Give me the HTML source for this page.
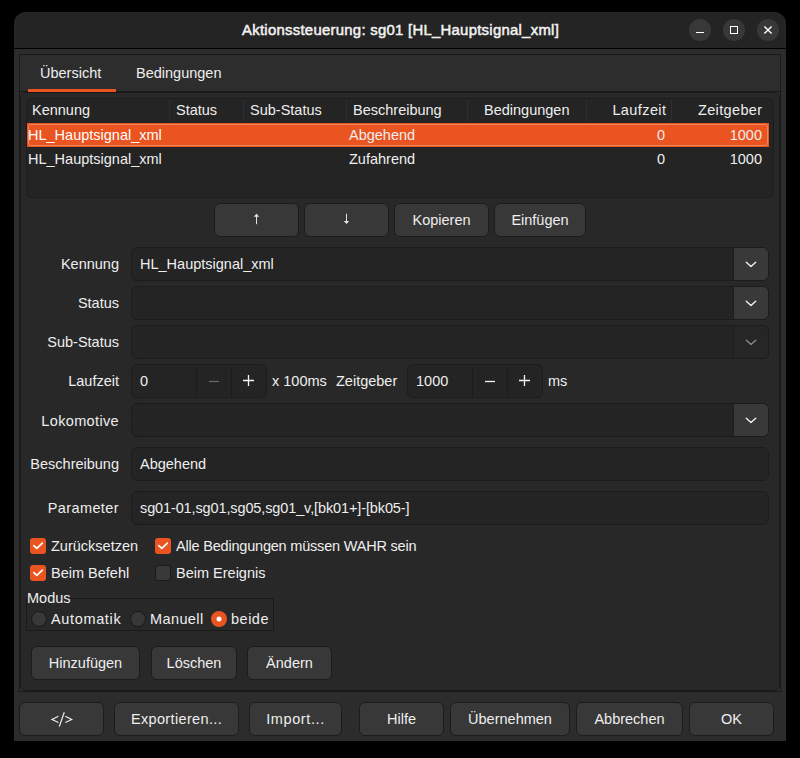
<!DOCTYPE html>
<html><head><meta charset="utf-8">
<style>
*{box-sizing:border-box;margin:0;padding:0}
html,body{width:800px;height:758px;background:#000;overflow:hidden}
body{position:relative;font-family:"Liberation Sans",sans-serif;font-size:14.5px;color:#eeeeee}
.a{position:absolute}
.t{position:absolute;white-space:nowrap;line-height:20px;height:20px}
.win{position:absolute;left:14px;top:12px;width:772px;height:729px;background:#2c2c2c;border-radius:12px 12px 0 0;overflow:hidden}
.hdr{position:absolute;left:0;top:0;width:772px;height:36px;background:#242424;border-bottom:1px solid #000}
.wb{position:absolute;top:7px;width:22px;height:22px;border-radius:50%;background:#3a3a3a}
.nb{position:absolute;left:19px;top:54px;width:762px;height:638px;border:1px solid #1c1c1c;background:#2e2e2e}
.page{position:absolute;left:20px;top:92px;width:760px;height:599px;background:#2a2a2a;border-radius:6px 6px 0 0}
.tree{position:absolute;left:26px;top:98px;width:748px;height:100px;background:#242424;border:1px solid #1c1c1c;border-radius:6px}
.sep{position:absolute;top:100px;width:1px;height:22px;background:#2e2e2e}
.btn{position:absolute;background:#383838;border:1px solid #1c1c1c;border-radius:6px;text-align:center;line-height:32px;white-space:nowrap}
.ent{position:absolute;left:131px;width:638px;height:34px;background:#242424;border:1px solid #1c1c1c;border-radius:6px}
.dd{position:absolute;right:0;top:0;width:35px;height:32px;background:#393939;border-left:1px solid #1c1c1c;border-radius:0 5px 5px 0}
.lbl{position:absolute;right:681px;white-space:nowrap;line-height:20px;height:20px}
.cb{position:absolute;width:16px;height:16px;border-radius:3px;background:#e95420}
.cbu{position:absolute;width:16px;height:16px;border-radius:3px;background:#383838;border:1px solid #1a1a1a}
.rd{position:absolute;width:16px;height:16px;border-radius:50%;background:#383838;border:1px solid #1a1a1a}
</style></head><body>
<div class="win"></div>
<!-- header -->
<div class="a" style="left:14px;top:12px;width:772px;height:36px;background:#242424;border-radius:12px 12px 0 0"></div>
<div class="a" style="left:14px;top:48px;width:772px;height:1px;background:#000"></div>
<div class="t" style="left:242px;top:20px;font-size:14.9px;color:#f2f2f2;-webkit-text-stroke:0.5px #f2f2f2;letter-spacing:0.27px">Aktionssteuerung: sg01 [HL_Hauptsignal_xml]</div>
<div class="a" style="left:689px;top:19px;width:22px;height:22px;border-radius:50%;background:#383838"></div>
<div class="a" style="left:696px;top:32px;width:8px;height:1.4px;background:#fff"></div>
<div class="a" style="left:723px;top:19px;width:22px;height:22px;border-radius:50%;background:#383838"></div>
<div class="a" style="left:730px;top:26px;width:8px;height:8px;border:1.5px solid #fff"></div>
<div class="a" style="left:757px;top:19px;width:22px;height:22px;border-radius:50%;background:#383838"></div>
<svg class="a" style="left:757px;top:19px" width="22" height="22"><path d="M7.4 7.4L14.6 14.6M14.6 7.4L7.4 14.6" stroke="#fff" stroke-width="1.4"/></svg>

<!-- notebook -->
<div class="a" style="left:19px;top:54px;width:762px;height:638px;border:1px solid #1a1a1a;background:#2d2d2d"></div>
<div class="a" style="left:20px;top:91px;width:760px;height:1px;background:#1a1a1a"></div>
<div class="a" style="left:20px;top:92px;width:760px;height:599px;background:#282828;border:1px solid #1a1a1a;border-radius:6px"></div>
<div class="t" style="left:40px;top:63px">Übersicht</div>
<div class="t" style="left:136px;top:63px">Bedingungen</div>
<div class="a" style="left:28px;top:89px;width:88px;height:3px;background:#e95420"></div>

<!-- tree -->
<div class="a" style="left:26px;top:98px;width:748px;height:100px;background:#242424;border:1px solid #1c1c1c;border-radius:6px"></div>
<div class="sep" style="left:169px"></div>
<div class="sep" style="left:243px"></div>
<div class="sep" style="left:346px"></div>
<div class="sep" style="left:467px"></div>
<div class="sep" style="left:586px"></div>
<div class="sep" style="left:671px"></div>
<div class="t" style="left:32px;top:100px">Kennung</div>
<div class="t" style="left:176px;top:100px">Status</div>
<div class="t" style="left:250px;top:100px">Sub-Status</div>
<div class="t" style="left:353px;top:100px">Beschreibung</div>
<div class="t" style="left:484px;top:100px">Bedingungen</div>
<div class="t" style="right:133.6px;top:100px;letter-spacing:0.4px">Laufzeit</div>
<div class="t" style="right:37.6px;top:100px;letter-spacing:0.35px">Zeitgeber</div>
<div class="a" style="left:27px;top:123px;width:742px;height:24px;background:#e95420"></div>
<div class="a" style="left:28px;top:124px;width:740px;height:22px;border:1px solid #f2845c;border-radius:3px"></div>
<div class="t" style="left:28px;top:125px;color:#fff">HL_Hauptsignal_xml</div>
<div class="t" style="left:349px;top:125px">Abgehend</div>
<div class="t" style="right:135px;top:125px">0</div>
<div class="t" style="right:38px;top:125px">1000</div>
<div class="t" style="left:28px;top:149px">HL_Hauptsignal_xml</div>
<div class="t" style="left:349px;top:149px">Zufahrend</div>
<div class="t" style="right:135px;top:149px">0</div>
<div class="t" style="right:38px;top:149px">1000</div>

<!-- buttons row -->
<div class="btn" style="left:214px;top:203px;width:85px;height:34px"></div>
<div class="btn" style="left:304px;top:203px;width:85px;height:34px"></div>
<div class="btn" style="left:394px;top:203px;width:95px;height:34px">Kopieren</div>
<div class="btn" style="left:494px;top:203px;width:92px;height:34px">Einfügen</div>

<!-- form -->
<div class="lbl" style="top:254px">Kennung</div>
<div class="ent" style="top:247px"><div class="dd"></div></div>
<div class="t" style="left:140px;top:254px">HL_Hauptsignal_xml</div>
<div class="lbl" style="top:293px">Status</div>
<div class="ent" style="top:286px"><div class="dd"></div></div>
<div class="lbl" style="top:332px">Sub-Status</div>
<div class="ent" style="top:325px"><div class="dd" style="background:#262626"></div></div>
<div class="lbl" style="top:371px">Laufzeit</div>
<div class="a" style="left:131px;top:364px;width:136px;height:34px;background:#242424;border:1px solid #1c1c1c;border-radius:6px"></div>
<div class="t" style="left:140px;top:371px">0</div>
<div class="t" style="left:272px;top:371px">x 100ms</div>
<div class="t" style="left:336px;top:371px">Zeitgeber</div>
<div class="a" style="left:407px;top:364px;width:136px;height:34px;background:#242424;border:1px solid #1c1c1c;border-radius:6px"></div>
<div class="t" style="left:416px;top:371px">1000</div>
<div class="t" style="left:548px;top:371px">ms</div>
<div class="lbl" style="top:411px;letter-spacing:0.35px">Lokomotive</div>
<div class="ent" style="top:403px"><div class="dd"></div></div>
<div class="lbl" style="top:454px">Beschreibung</div>
<div class="ent" style="top:447px"></div>
<div class="t" style="left:140px;top:454px">Abgehend</div>
<div class="lbl" style="top:498px;letter-spacing:0.4px">Parameter</div>
<div class="ent" style="top:491px"></div>
<div class="t" style="left:140px;top:498px;letter-spacing:-0.12px">sg01-01,sg01,sg05,sg01_v,[bk01+]-[bk05-]</div>

<!-- checkboxes -->
<div class="cb" style="left:30px;top:538px"></div>
<div class="t" style="left:51px;top:536px">Zurücksetzen</div>
<div class="cb" style="left:155px;top:538px"></div>
<div class="t" style="left:176px;top:536px;letter-spacing:-0.2px">Alle Bedingungen müssen WAHR sein</div>
<div class="cb" style="left:30px;top:565px"></div>
<div class="t" style="left:51px;top:563px">Beim Befehl</div>
<div class="cbu" style="left:155px;top:565px"></div>
<div class="t" style="left:176px;top:563px">Beim Ereignis</div>

<!-- modus -->
<div class="a" style="left:26px;top:598px;width:248px;height:33px;border:1px solid #1a1a1a"></div>
<div class="t" style="left:27px;top:588px;background:#282828">Modus</div>
<div class="rd" style="left:31px;top:611px"></div>
<div class="t" style="left:51px;top:609px;letter-spacing:0.65px">Automatik</div>
<div class="rd" style="left:130px;top:611px"></div>
<div class="t" style="left:150px;top:609px;letter-spacing:0.4px">Manuell</div>
<div class="a" style="left:211px;top:611px;width:16px;height:16px;border-radius:50%;background:#e95420"></div>
<div class="t" style="left:231px;top:609px;letter-spacing:0.5px">beide</div>

<div class="btn" style="left:31px;top:646px;width:109px;height:34px">Hinzufügen</div>
<div class="btn" style="left:151px;top:646px;width:86px;height:34px">Löschen</div>
<div class="btn" style="left:247px;top:646px;width:85px;height:34px">Ändern</div>

<!-- bottom buttons -->
<div class="btn" style="left:19px;top:702px;width:85px;height:34px"></div>
<div class="btn" style="left:114px;top:702px;width:125px;height:34px;letter-spacing:0.35px">Exportieren...</div>
<div class="btn" style="left:249px;top:702px;width:93px;height:34px;letter-spacing:0.6px">Import...</div>
<div class="btn" style="left:359px;top:702px;width:85px;height:34px">Hilfe</div>
<div class="btn" style="left:450px;top:702px;width:120px;height:34px">Übernehmen</div>
<div class="btn" style="left:576px;top:702px;width:107px;height:34px">Abbrechen</div>
<div class="btn" style="left:689px;top:702px;width:85px;height:34px">OK</div>
<svg class="a" style="left:0;top:0" width="800" height="758" viewBox="0 0 800 758">
<g fill="none" stroke="#f2f2f2" stroke-width="1.4" stroke-linecap="round" stroke-linejoin="round">
<path d="M746.3 262.3L751 266.5L755.7 262.3"/>
<path d="M746.3 301.3L751 305.5L755.7 301.3"/>
<path d="M746.3 418.3L751 422.5L755.7 418.3"/>
</g>
<path d="M746.3 340.3L751 344.5L755.7 340.3" fill="none" stroke="#8a8a8a" stroke-width="1.4" stroke-linecap="round" stroke-linejoin="round"/>
<g fill="none" stroke="#fff" stroke-width="1.7" stroke-linecap="round" stroke-linejoin="round">
<path d="M33.8 545.6L36.8 548.4L42.3 543.1"/>
<path d="M158.8 545.6L161.8 548.4L167.3 543.1"/>
<path d="M33.8 572.6L36.8 575.4L42.3 570.1"/>
</g>
<circle cx="219" cy="619" r="2.5" fill="#fff"/>
<g stroke="#1c1c1c" stroke-width="1">
<path d="M196.5 366V397M231.5 366V397M472.5 366V397M507.5 366V397"/>
</g>
<path d="M209 381.5H219" stroke="#6a6a6a" stroke-width="1.2"/>
<path d="M243 380.5H254M248.5 375V386" stroke="#f5f5f5" stroke-width="1.3"/>
<path d="M485 381.5H495" stroke="#f5f5f5" stroke-width="1.3"/>
<path d="M519 380.5H530M524.5 375V386" stroke="#f5f5f5" stroke-width="1.3"/>
<g stroke="#e0e0e0" stroke-width="1" fill="none"><path d="M256.5 216V224.2"/><path d="M346.5 213.8V221.8"/></g>
<path d="M253.8 216.7L256.5 213.8L259.2 216.7Z" fill="#e8e8e8"/>
<path d="M343.8 221.1L346.5 224L349.2 221.1Z" fill="#e8e8e8"/>
<g fill="none" stroke="#eeeeee" stroke-width="1.15" stroke-linejoin="miter"><path d="M58.4 716.3L52 719.4L58.4 722.5"/><path d="M64.3 712.3L59.3 726.5"/><path d="M65.3 716.3L71.7 719.4L65.3 722.5"/></g>
</svg>
</body></html>
